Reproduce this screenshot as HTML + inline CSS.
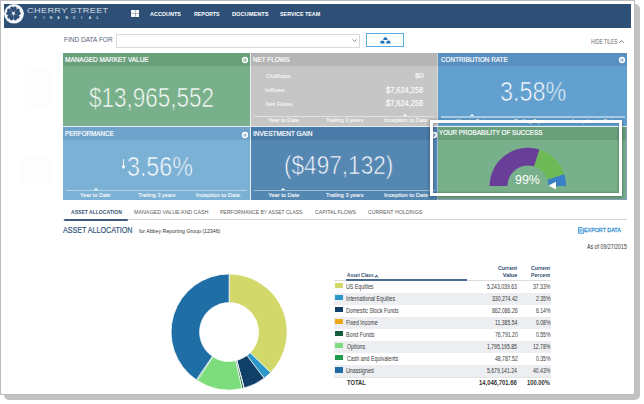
<!DOCTYPE html>
<html><head><meta charset="utf-8"><style>*{margin:0;padding:0;box-sizing:border-box}
html,body{width:644px;height:404px;overflow:hidden;background:#fff;font-family:"Liberation Sans",sans-serif}
.a{position:absolute}
.t{position:absolute;white-space:nowrap;line-height:1;transform-origin:0 0}
</style></head><body>
<div class="a" style="left:4px;top:4px;width:636px;height:396px;background:#c2c2c2;border-radius:5px;"></div>
<div class="a" style="left:0;top:0;width:635px;height:395px;background:#fff;border:1px solid #bdbdbd"></div>
<div class="a" style="left:25px;top:68px;width:27px;height:40px;background:#fdfdfd;border-radius:6px;"></div>
<div class="a" style="left:20px;top:157px;width:32px;height:27px;background:#fdfdfd;"></div>
<div class="a" style="left:4px;top:4px;width:627px;height:23.5px;background:#2e5077;"></div>
<svg class="a" style="left:4.4px;top:4.0px" width="20" height="19.6" viewBox="0 0 20 19.6">
<ellipse cx="10" cy="9.8" rx="9.95" ry="9.75" fill="#f2f6fa"/>
<g transform="translate(9.45 9.45)" fill="#2e5077"><path transform="rotate(0)" d="M0 -0.9 C-1.4 -2.1 -3.5 -3.4 -3.3 -5.4 C-3.1 -7.2 -1.0 -7.6 0 -6.3 C1.0 -7.6 3.1 -7.2 3.3 -5.4 C3.5 -3.4 1.4 -2.1 0 -0.9Z"/><path transform="rotate(72)" d="M0 -0.9 C-1.4 -2.1 -3.5 -3.4 -3.3 -5.4 C-3.1 -7.2 -1.0 -7.6 0 -6.3 C1.0 -7.6 3.1 -7.2 3.3 -5.4 C3.5 -3.4 1.4 -2.1 0 -0.9Z"/><path transform="rotate(144)" d="M0 -0.9 C-1.4 -2.1 -3.5 -3.4 -3.3 -5.4 C-3.1 -7.2 -1.0 -7.6 0 -6.3 C1.0 -7.6 3.1 -7.2 3.3 -5.4 C3.5 -3.4 1.4 -2.1 0 -0.9Z"/><path transform="rotate(216)" d="M0 -0.9 C-1.4 -2.1 -3.5 -3.4 -3.3 -5.4 C-3.1 -7.2 -1.0 -7.6 0 -6.3 C1.0 -7.6 3.1 -7.2 3.3 -5.4 C3.5 -3.4 1.4 -2.1 0 -0.9Z"/><path transform="rotate(288)" d="M0 -0.9 C-1.4 -2.1 -3.5 -3.4 -3.3 -5.4 C-3.1 -7.2 -1.0 -7.6 0 -6.3 C1.0 -7.6 3.1 -7.2 3.3 -5.4 C3.5 -3.4 1.4 -2.1 0 -0.9Z"/></g>
<circle cx="9.45" cy="9.45" r="1.0" fill="#fff"/>
</svg>
<div class="t" style="left:26.54px;top:6.63px;font-size:7.41px;color:#e4ebf2;transform:scaleX(1.240);letter-spacing:0.267px;-webkit-text-stroke:0.12px #2e5077;">CHERRY STREET</div>
<div class="t" style="left:34.53px;top:17.47px;font-size:3.34px;color:#dce5ee;font-weight:bold">F</div>
<div class="t" style="left:43.54px;top:17.47px;font-size:3.34px;color:#dce5ee;font-weight:bold">I</div>
<div class="t" style="left:49.79px;top:17.47px;font-size:3.34px;color:#dce5ee;font-weight:bold">N</div>
<div class="t" style="left:57.30px;top:17.47px;font-size:3.34px;color:#dce5ee;font-weight:bold">A</div>
<div class="t" style="left:65.49px;top:17.47px;font-size:3.34px;color:#dce5ee;font-weight:bold">N</div>
<div class="t" style="left:73.07px;top:17.47px;font-size:3.34px;color:#dce5ee;font-weight:bold">C</div>
<div class="t" style="left:81.34px;top:17.47px;font-size:3.34px;color:#dce5ee;font-weight:bold">I</div>
<div class="t" style="left:88.80px;top:17.47px;font-size:3.34px;color:#dce5ee;font-weight:bold">A</div>
<div class="t" style="left:96.42px;top:17.47px;font-size:3.34px;color:#dce5ee;font-weight:bold">L</div>
<div class="a" style="left:131px;top:9.8px;width:8px;height:7px;background:#fdfdff;"></div>
<div class="a" style="left:134.6px;top:9.8px;width:0.7px;height:7px;background:rgba(46,80,119,0.35);"></div>
<div class="a" style="left:131px;top:13.1px;width:8px;height:0.7px;background:rgba(46,80,119,0.35);"></div>
<div class="t" style="left:150.47px;top:10.81px;font-size:6.25px;color:#fff;font-weight:bold;transform:scaleX(0.874);">ACCOUNTS</div>
<div class="t" style="left:194.25px;top:10.81px;font-size:6.25px;color:#fff;font-weight:bold;transform:scaleX(0.849);">REPORTS</div>
<div class="t" style="left:231.73px;top:10.81px;font-size:6.25px;color:#fff;font-weight:bold;transform:scaleX(0.909);">DOCUMENTS</div>
<div class="t" style="left:279.85px;top:10.81px;font-size:6.25px;color:#fff;font-weight:bold;transform:scaleX(0.860);">SERVICE TEAM</div>
<div class="t" style="left:63.77px;top:36.15px;font-size:7.27px;color:#56657c;transform:scaleX(0.897);">FIND DATA FOR</div>
<div class="a" style="left:116px;top:33.5px;width:244px;height:14px;background:#fff;border:1px solid #dadada;"></div>
<svg class="a" style="left:352px;top:39px" width="5" height="3" viewBox="0 0 5 3"><path d="M0.3 0.3 L2.5 2.5 L4.7 0.3" stroke="#777" stroke-width="0.8" fill="none"/></svg>
<div class="a" style="left:366px;top:33.3px;width:37.6px;height:14.1px;background:#fff;border:1.2px solid #5aade0;"></div>
<svg class="a" style="left:380px;top:36px" width="11" height="8" viewBox="0 0 11 8">
<g fill="#1f72b8"><path d="M3.3 3.4 a2.1 2.1 0 0 1 4.2 0 v0.6 h-4.2z"/><path d="M0.3 6.6 a2.1 2.1 0 0 1 4.2 0 v0.9 h-4.2z"/><path d="M6.3 6.6 a2.1 2.1 0 0 1 4.2 0 v0.9 h-4.2z"/></g></svg>
<div class="t" style="left:591.20px;top:39.39px;font-size:6.40px;color:#6a6a6a;transform:scaleX(0.764);">HIDE TILES</div>
<svg class="a" style="left:618.8px;top:40.3px" width="5.2" height="3" viewBox="0 0 5.2 3"><path d="M0.4 2.7 L2.6 0.5 L4.8 2.7" stroke="#6e6e6e" stroke-width="0.9" fill="none"/></svg>
<div class="a" style="left:63px;top:53px;width:186.7px;height:73px;background:#78b08b;"></div>
<div class="a" style="left:63px;top:53px;width:186.7px;height:12.8px;background:#6a9f7c;"></div>
<div class="a" style="left:251px;top:53px;width:186.5px;height:73px;background:#c5c6c5;"></div>
<div class="a" style="left:251px;top:53px;width:186.5px;height:12.8px;background:#b4b5b4;"></div>
<div class="a" style="left:438px;top:53px;width:189px;height:73px;background:#62a0d0;"></div>
<div class="a" style="left:438px;top:53px;width:189px;height:12.8px;background:#5a90c0;"></div>
<div class="a" style="left:63px;top:127px;width:186.7px;height:73px;background:#7cb1d6;"></div>
<div class="a" style="left:63px;top:127px;width:186.7px;height:12.8px;background:#6fa3cb;"></div>
<div class="a" style="left:251px;top:127px;width:186.5px;height:73px;background:#5587b3;"></div>
<div class="a" style="left:251px;top:127px;width:186.5px;height:12.8px;background:#4a7ba8;"></div>
<div class="a" style="left:438px;top:127px;width:189px;height:73px;background:#78b08b;"></div>
<div class="a" style="left:438px;top:127px;width:189px;height:12.8px;background:#6a9f7c;"></div>
<div class="t" style="left:64.67px;top:56.40px;font-size:7.56px;color:#ffffff;transform:scaleX(0.855);-webkit-text-stroke:0.2px #fff;">MANAGED MARKET VALUE</div>
<svg class="a" style="left:241.30px;top:56.00px" width="8" height="8" viewBox="0 0 8 8"><circle cx="4" cy="4" r="3.15" fill="#fff"/><circle cx="4" cy="4" r="1.55" fill="#6a9f7c"/><path d="M3.3 2.7 L5.0 4 L3.3 5.3Z" fill="#fff" opacity="0.8"/></svg>
<div class="t" style="left:89.48px;top:84.37px;font-size:27.33px;color:#ffffff;transform:scaleX(0.823);-webkit-text-stroke:0.7px #78b08b;">$13,965,552</div>
<div class="t" style="left:252.88px;top:56.40px;font-size:7.56px;color:#ffffff;transform:scaleX(0.837);-webkit-text-stroke:0.2px #fff;">NET FLOWS</div>
<div class="t" style="left:441.08px;top:56.40px;font-size:7.56px;color:#ffffff;transform:scaleX(0.843);-webkit-text-stroke:0.2px #fff;">CONTRIBUTION RATE</div>
<svg class="a" style="left:617.60px;top:56.00px" width="8" height="8" viewBox="0 0 8 8"><circle cx="4" cy="4" r="3.15" fill="#fff"/><circle cx="4" cy="4" r="1.55" fill="#5a90c0"/><path d="M3.3 2.7 L5.0 4 L3.3 5.3Z" fill="#fff" opacity="0.8"/></svg>
<div class="t" style="left:64.69px;top:129.93px;font-size:7.41px;color:#ffffff;transform:scaleX(0.844);-webkit-text-stroke:0.2px #fff;">PERFORMANCE</div>
<svg class="a" style="left:241.20px;top:130.70px" width="8" height="8" viewBox="0 0 8 8"><circle cx="4" cy="4" r="3.15" fill="#fff"/><circle cx="4" cy="4" r="1.55" fill="#6fa3cb"/><path d="M3.3 2.7 L5.0 4 L3.3 5.3Z" fill="#fff" opacity="0.8"/></svg>
<div class="t" style="left:252.80px;top:129.93px;font-size:7.41px;color:#ffffff;transform:scaleX(0.878);-webkit-text-stroke:0.2px #fff;">INVESTMENT GAIN</div>
<svg class="a" style="left:429.50px;top:130.50px" width="8" height="8" viewBox="0 0 8 8"><circle cx="4" cy="4" r="3.15" fill="#fff"/><circle cx="4" cy="4" r="1.55" fill="#4a7ba8"/><path d="M3.3 2.7 L5.0 4 L3.3 5.3Z" fill="#fff" opacity="0.8"/></svg>
<div class="t" style="left:439.36px;top:129.15px;font-size:7.27px;color:#ffffff;transform:scaleX(0.863);-webkit-text-stroke:0.2px #fff;">YOUR PROBABILITY OF SUCCESS</div>
<div class="t" style="left:265.71px;top:72.73px;font-size:6.10px;color:#f6f6f6;transform:scaleX(1.037);-webkit-text-stroke:0.12px #f4f4f4;">Outflows</div>
<div class="t" style="left:265.42px;top:86.83px;font-size:6.10px;color:#f6f6f6;transform:scaleX(1.032);-webkit-text-stroke:0.12px #f4f4f4;">Inflows</div>
<div class="t" style="left:265.50px;top:100.83px;font-size:6.10px;color:#f6f6f6;-webkit-text-stroke:0.12px #f4f4f4;">Net Flows</div>
<div class="t" style="left:414.72px;top:72.16px;font-size:7.85px;color:#f6f6f6;transform:scaleX(0.982);-webkit-text-stroke:0.2px #fff;">$0</div>
<div class="t" style="left:386.13px;top:85.56px;font-size:8.43px;color:#f6f6f6;transform:scaleX(0.882);-webkit-text-stroke:0.2px #fff;">$7,624,258</div>
<div class="t" style="left:386.13px;top:99.46px;font-size:8.43px;color:#f6f6f6;transform:scaleX(0.882);-webkit-text-stroke:0.2px #fff;">$7,624,258</div>
<div class="t" style="left:500.01px;top:77.57px;font-size:27.33px;color:#ffffff;transform:scaleX(0.856);-webkit-text-stroke:0.7px #62a0d0;">3.58%</div>
<svg class="a" style="left:120.5px;top:158.8px" width="5" height="10.5" viewBox="0 0 5 10.5"><path d="M2.5 0 V9" stroke="#fff" stroke-width="0.9"/><path d="M0.4 6.8 L2.5 10.2 L4.6 6.8z" fill="#fff"/></svg>
<div class="t" style="left:126.62px;top:151.71px;font-size:28.34px;color:#ffffff;transform:scaleX(0.820);-webkit-text-stroke:0.7px #7cb1d6;">3.56%</div>
<div class="t" style="left:284.10px;top:151.91px;font-size:26.45px;color:#ffffff;transform:scaleX(0.855);-webkit-text-stroke:0.7px #5587b3;">($497,132)</div>
<div class="a" style="left:253.5px;top:115.6px;width:181.5px;height:1.4px;background:rgba(255,255,255,0.45);"></div>
<div class="a" style="left:403.4px;top:113.6px;width:0;height:0;border-left:2.1px solid transparent;border-right:2.1px solid transparent;border-bottom:2px solid #fff"></div>
<div class="t" style="left:268.08px;top:117.70px;font-size:5.67px;color:#f8f8f8;transform:scaleX(0.993);-webkit-text-stroke:0.12px #f8f8f8;">Year to Date</div>
<div class="t" style="left:326.28px;top:117.70px;font-size:5.67px;color:#f8f8f8;transform:scaleX(0.966);-webkit-text-stroke:0.12px #f8f8f8;">Trailing 3 years</div>
<div class="t" style="left:383.77px;top:117.70px;font-size:5.67px;color:#f8f8f8;transform:scaleX(1.024);-webkit-text-stroke:0.12px #f8f8f8;">Inception to Date</div>
<div class="a" style="left:440.5px;top:116.3px;width:184px;height:1.4px;background:rgba(255,255,255,0.45);"></div>
<div class="a" style="left:469.5px;top:114.3px;width:0;height:0;border-left:2.1px solid transparent;border-right:2.1px solid transparent;border-bottom:2px solid #fff"></div>
<div class="t" style="left:456.38px;top:118.70px;font-size:5.67px;color:#f8f8f8;-webkit-text-stroke:0.12px #f8f8f8;">Year to Date</div>
<div class="t" style="left:514.38px;top:118.70px;font-size:5.67px;color:#f8f8f8;transform:scaleX(0.968);-webkit-text-stroke:0.12px #f8f8f8;">Trailing 3 years</div>
<div class="t" style="left:572.47px;top:118.70px;font-size:5.67px;color:#f8f8f8;transform:scaleX(1.022);-webkit-text-stroke:0.12px #f8f8f8;">Inception to Date</div>
<div class="a" style="left:65.5px;top:189.9px;width:181.7px;height:1.4px;background:rgba(255,255,255,0.45);"></div>
<div class="a" style="left:93.5px;top:187.9px;width:0;height:0;border-left:2.1px solid transparent;border-right:2.1px solid transparent;border-bottom:2px solid #fff"></div>
<div class="t" style="left:80.18px;top:192.70px;font-size:5.67px;color:#f8f8f8;transform:scaleX(0.983);-webkit-text-stroke:0.12px #f8f8f8;">Year to Date</div>
<div class="t" style="left:138.08px;top:192.70px;font-size:5.67px;color:#f8f8f8;transform:scaleX(0.976);-webkit-text-stroke:0.12px #f8f8f8;">Trailing 3 years</div>
<div class="t" style="left:195.76px;top:192.70px;font-size:5.67px;color:#f8f8f8;transform:scaleX(1.034);-webkit-text-stroke:0.12px #f8f8f8;">Inception to Date</div>
<div class="a" style="left:253.5px;top:189.9px;width:181.5px;height:1.4px;background:rgba(255,255,255,0.45);"></div>
<div class="a" style="left:281.4px;top:187.9px;width:0;height:0;border-left:2.1px solid transparent;border-right:2.1px solid transparent;border-bottom:2px solid #fff"></div>
<div class="t" style="left:268.18px;top:192.70px;font-size:5.67px;color:#f8f8f8;-webkit-text-stroke:0.12px #f8f8f8;">Year to Date</div>
<div class="t" style="left:326.28px;top:192.70px;font-size:5.67px;color:#f8f8f8;transform:scaleX(0.974);-webkit-text-stroke:0.12px #f8f8f8;">Trailing 3 years</div>
<div class="t" style="left:383.56px;top:192.70px;font-size:5.67px;color:#f8f8f8;transform:scaleX(1.034);-webkit-text-stroke:0.12px #f8f8f8;">Inception to Date</div>
<div class="a" style="left:249.7px;top:53px;width:1.3px;height:147px;background:#e8f0ec;"></div>
<div class="a" style="left:437px;top:53px;width:1.2px;height:147px;background:rgba(225,232,240,0.55);"></div>
<div class="a" style="left:63px;top:126px;width:564px;height:1px;background:#e6eef4;"></div>
<svg class="a" style="left:0;top:0" width="644" height="404"><path d="M489.60 186.10 A38.3 38.3 0 0 1 539.54 149.61 L534.13 166.57 A20.5 20.5 0 0 0 507.40 186.10Z" fill="#683e98"/><path d="M539.54 149.61 A38.3 38.3 0 0 1 564.33 174.26 L547.40 179.77 A20.5 20.5 0 0 0 534.13 166.57Z" fill="#6cb955"/><path d="M564.33 174.26 A38.3 38.3 0 0 1 566.20 186.10 L548.40 186.10 A20.5 20.5 0 0 0 547.40 179.77Z" fill="#3b7fc6"/><path d="M548.5 185.6 L556 181.8 L556 189.4Z" fill="#fff"/></svg>
<div class="t" style="left:515.43px;top:172.86px;font-size:13.52px;color:#ffffff;transform:scaleX(0.917);">99%</div>
<div class="a" style="left:430px;top:120px;width:192px;height:76px;border:3px solid #fff;box-shadow:0 1px 3px 1px rgba(0,0,0,0.25), inset 0 0 2px 1px rgba(0,0,0,0.2)"></div>
<div class="a" style="left:626.2px;top:127px;width:0.8px;height:73px;background:rgba(150,150,230,0.6);"></div>
<div class="a" style="left:438px;top:199.3px;width:189px;height:0.8px;background:rgba(150,150,230,0.6);"></div>
<div class="t" style="left:71.08px;top:209.01px;font-size:6.25px;color:#3b5575;font-weight:bold;transform:scaleX(0.808);">ASSET ALLOCATION</div>
<div class="t" style="left:133.86px;top:209.01px;font-size:6.25px;color:#5a5a5a;transform:scaleX(0.855);">MANAGED VALUE AND CASH</div>
<div class="t" style="left:219.79px;top:209.01px;font-size:6.25px;color:#5a5a5a;transform:scaleX(0.804);">PERFORMANCE BY ASSET CLASS</div>
<div class="t" style="left:314.54px;top:209.01px;font-size:6.25px;color:#5a5a5a;transform:scaleX(0.833);">CAPITAL FLOWS</div>
<div class="t" style="left:367.74px;top:209.01px;font-size:6.25px;color:#5a5a5a;transform:scaleX(0.836);">CURRENT HOLDINGS</div>
<div class="a" style="left:63px;top:219px;width:563.6px;height:1.2px;background:#d4d4d4;"></div>
<div class="a" style="left:63.7px;top:218.6px;width:64.6px;height:2.4px;background:#3e5b80;border-radius:1px;"></div>
<div class="t" style="left:63.09px;top:226.09px;font-size:8.87px;color:#36567c;transform:scaleX(0.804);-webkit-text-stroke:0.2px #36567c;">ASSET ALLOCATION</div>
<div class="t" style="left:138.93px;top:227.83px;font-size:6.10px;color:#333;transform:scaleX(0.854);">for Abbey Reporting Group (12346)</div>
<svg class="a" style="left:577.8px;top:227px" width="6.2" height="6.8" viewBox="0 0 6.2 6.8"><path d="M0.5 0.5 H4.2 L5.7 2 V6.3 H0.5Z" fill="#d6eaf8" stroke="#3a94d4" stroke-width="0.9"/><path d="M2 4.8 V2.6 H3.6 A0.8 0.8 0 0 1 3.6 4 H2" stroke="#3a94d4" stroke-width="0.7" fill="none"/></svg>
<div class="t" style="left:584.46px;top:227.43px;font-size:6.10px;color:#3a94d4;transform:scaleX(0.878);-webkit-text-stroke:0.3px #3a94d4;">EXPORT DATA</div>
<div class="t" style="left:586.99px;top:243.72px;font-size:6.83px;color:#333;transform:scaleX(0.771);">As of 09/27/2015</div>
<svg class="a" style="left:0;top:0" width="644" height="404"><path d="M229.10 274.00 A58 58 0 0 1 270.55 372.57 L250.18 352.64 A29.5 29.5 0 0 0 229.10 302.50Z" fill="#d2d86a" stroke="#fff" stroke-width="0.7"/><path d="M270.55 372.57 A58 58 0 0 1 264.13 378.23 L246.92 355.51 A29.5 29.5 0 0 0 250.18 352.64Z" fill="#2c97c9" stroke="#fff" stroke-width="0.7"/><path d="M264.13 378.23 A58 58 0 0 1 244.16 388.01 L236.76 360.49 A29.5 29.5 0 0 0 246.92 355.51Z" fill="#103f68" stroke="#fff" stroke-width="0.7"/><path d="M244.16 388.01 A58 58 0 0 1 243.88 388.09 L236.62 360.53 A29.5 29.5 0 0 0 236.76 360.49Z" fill="#f0a818" stroke="#fff" stroke-width="0.7"/><path d="M243.88 388.09 A58 58 0 0 1 241.93 388.56 L235.63 360.77 A29.5 29.5 0 0 0 236.62 360.53Z" fill="#145d3d" stroke="#fff" stroke-width="0.7"/><path d="M241.93 388.56 A58 58 0 0 1 197.32 380.52 L212.93 356.68 A29.5 29.5 0 0 0 235.63 360.77Z" fill="#7ddd7d" stroke="#fff" stroke-width="0.7"/><path d="M197.32 380.52 A58 58 0 0 1 196.26 379.81 L212.40 356.32 A29.5 29.5 0 0 0 212.93 356.68Z" fill="#1e9a4e" stroke="#fff" stroke-width="0.7"/><path d="M196.26 379.81 A58 58 0 0 1 229.14 274.00 L229.12 302.50 A29.5 29.5 0 0 0 212.40 356.32Z" fill="#1f6ea6" stroke="#fff" stroke-width="0.7"/></svg>
<div class="t" style="left:346.69px;top:272.90px;font-size:5.67px;color:#2b4a6e;font-weight:bold;transform:scaleX(0.828);">Asset Class</div>
<svg class="a" style="left:374.3px;top:273.6px" width="5" height="4" viewBox="0 0 5 4"><path d="M0.3 3.6 L2.5 0.8 L4.7 3.6 L3.6 3.6 L2.5 2.2 L1.4 3.6Z" fill="#2b4a6e"/></svg>
<div class="t" style="left:498.09px;top:266.22px;font-size:5.52px;color:#2b4a6e;font-weight:bold;transform:scaleX(0.956);">Current</div>
<div class="t" style="left:502.87px;top:272.72px;font-size:5.52px;color:#2b4a6e;font-weight:bold;">Value</div>
<div class="t" style="left:530.99px;top:266.22px;font-size:5.52px;color:#2b4a6e;font-weight:bold;transform:scaleX(0.951);">Current</div>
<div class="t" style="left:530.86px;top:272.72px;font-size:5.52px;color:#2b4a6e;font-weight:bold;transform:scaleX(0.943);">Percent</div>
<div class="a" style="left:334.2px;top:279.6px;width:216.8px;height:1px;background:#dcdcdc;"></div>
<div class="a" style="left:346px;top:279.4px;width:120.5px;height:1.4px;background:#4a6a90;"></div>
<div class="a" style="left:335.1px;top:282.8px;width:7.8px;height:5.2px;background:#d2d86a;"></div>
<div class="t" style="left:346.40px;top:283.76px;font-size:6.54px;color:#3a3a3a;transform:scaleX(0.806);">US Equities</div>
<div class="t" style="left:487.44px;top:283.76px;font-size:6.54px;color:#3a3a3a;transform:scaleX(0.782);">5,243,039.63</div>
<div class="t" style="left:532.73px;top:283.76px;font-size:6.54px;color:#3a3a3a;transform:scaleX(0.782);">37.33%</div>
<div class="a" style="left:334.2px;top:292.68px;width:216.8px;height:12.08px;background:#eceef1;"></div>
<div class="a" style="left:335.1px;top:294.88px;width:7.8px;height:5.2px;background:#2c97c9;"></div>
<div class="t" style="left:346.31px;top:295.84px;font-size:6.54px;color:#3a3a3a;transform:scaleX(0.806);">International Equities</div>
<div class="t" style="left:491.75px;top:295.84px;font-size:6.54px;color:#3a3a3a;transform:scaleX(0.782);">330,274.42</div>
<div class="t" style="left:535.57px;top:295.84px;font-size:6.54px;color:#3a3a3a;transform:scaleX(0.782);">2.35%</div>
<div class="a" style="left:335.1px;top:306.96000000000004px;width:7.8px;height:5.2px;background:#103f68;"></div>
<div class="t" style="left:346.37px;top:307.92px;font-size:6.54px;color:#3a3a3a;transform:scaleX(0.806);">Domestic Stock Funds</div>
<div class="t" style="left:491.71px;top:307.92px;font-size:6.54px;color:#3a3a3a;transform:scaleX(0.782);">862,086.26</div>
<div class="t" style="left:535.57px;top:307.92px;font-size:6.54px;color:#3a3a3a;transform:scaleX(0.782);">6.14%</div>
<div class="a" style="left:334.2px;top:316.84000000000003px;width:216.8px;height:12.08px;background:#eceef1;"></div>
<div class="a" style="left:335.1px;top:319.04px;width:7.8px;height:5.2px;background:#f0a818;"></div>
<div class="t" style="left:346.37px;top:320.00px;font-size:6.54px;color:#3a3a3a;transform:scaleX(0.806);">Fixed Income</div>
<div class="t" style="left:494.86px;top:320.00px;font-size:6.54px;color:#3a3a3a;transform:scaleX(0.782);">11,385.54</div>
<div class="t" style="left:535.57px;top:320.00px;font-size:6.54px;color:#3a3a3a;transform:scaleX(0.782);">0.08%</div>
<div class="a" style="left:335.1px;top:331.12px;width:7.8px;height:5.2px;background:#145d3d;"></div>
<div class="t" style="left:346.37px;top:332.08px;font-size:6.54px;color:#3a3a3a;transform:scaleX(0.806);">Bond Funds</div>
<div class="t" style="left:494.53px;top:332.08px;font-size:6.54px;color:#3a3a3a;transform:scaleX(0.782);">76,791.20</div>
<div class="t" style="left:535.57px;top:332.08px;font-size:6.54px;color:#3a3a3a;transform:scaleX(0.782);">0.55%</div>
<div class="a" style="left:334.2px;top:341.0px;width:216.8px;height:12.08px;background:#eceef1;"></div>
<div class="a" style="left:335.1px;top:343.2px;width:7.8px;height:5.2px;background:#7ddd7d;"></div>
<div class="t" style="left:346.56px;top:344.16px;font-size:6.54px;color:#3a3a3a;transform:scaleX(0.806);">Options</div>
<div class="t" style="left:487.43px;top:344.16px;font-size:6.54px;color:#3a3a3a;transform:scaleX(0.782);">1,795,195.85</div>
<div class="t" style="left:532.73px;top:344.16px;font-size:6.54px;color:#3a3a3a;transform:scaleX(0.782);">12.78%</div>
<div class="a" style="left:335.1px;top:355.28000000000003px;width:7.8px;height:5.2px;background:#1e9a4e;"></div>
<div class="t" style="left:346.54px;top:356.24px;font-size:6.54px;color:#3a3a3a;transform:scaleX(0.806);">Cash and Equivalents</div>
<div class="t" style="left:494.59px;top:356.24px;font-size:6.54px;color:#3a3a3a;transform:scaleX(0.782);">48,787.52</div>
<div class="t" style="left:535.57px;top:356.24px;font-size:6.54px;color:#3a3a3a;transform:scaleX(0.782);">0.35%</div>
<div class="a" style="left:334.2px;top:365.16px;width:216.8px;height:12.08px;background:#eceef1;"></div>
<div class="a" style="left:335.1px;top:367.36px;width:7.8px;height:5.2px;background:#1f6ea6;"></div>
<div class="t" style="left:346.40px;top:368.32px;font-size:6.54px;color:#3a3a3a;transform:scaleX(0.806);">Unassigned</div>
<div class="t" style="left:487.37px;top:368.32px;font-size:6.54px;color:#3a3a3a;transform:scaleX(0.782);">5,679,141.24</div>
<div class="t" style="left:532.73px;top:368.32px;font-size:6.54px;color:#3a3a3a;transform:scaleX(0.782);">40.43%</div>
<div class="a" style="left:334.2px;top:377.2px;width:216.8px;height:0.8px;background:#e4e4e4;"></div>
<div class="t" style="left:346.74px;top:379.76px;font-size:6.54px;color:#333;font-weight:bold;transform:scaleX(0.888);">TOTAL</div>
<div class="t" style="left:479.13px;top:379.76px;font-size:6.54px;color:#333;font-weight:bold;transform:scaleX(0.905);">14,046,701.66</div>
<div class="t" style="left:526.64px;top:379.76px;font-size:6.54px;color:#333;font-weight:bold;transform:scaleX(0.887);">100.00%</div>
</body></html>
